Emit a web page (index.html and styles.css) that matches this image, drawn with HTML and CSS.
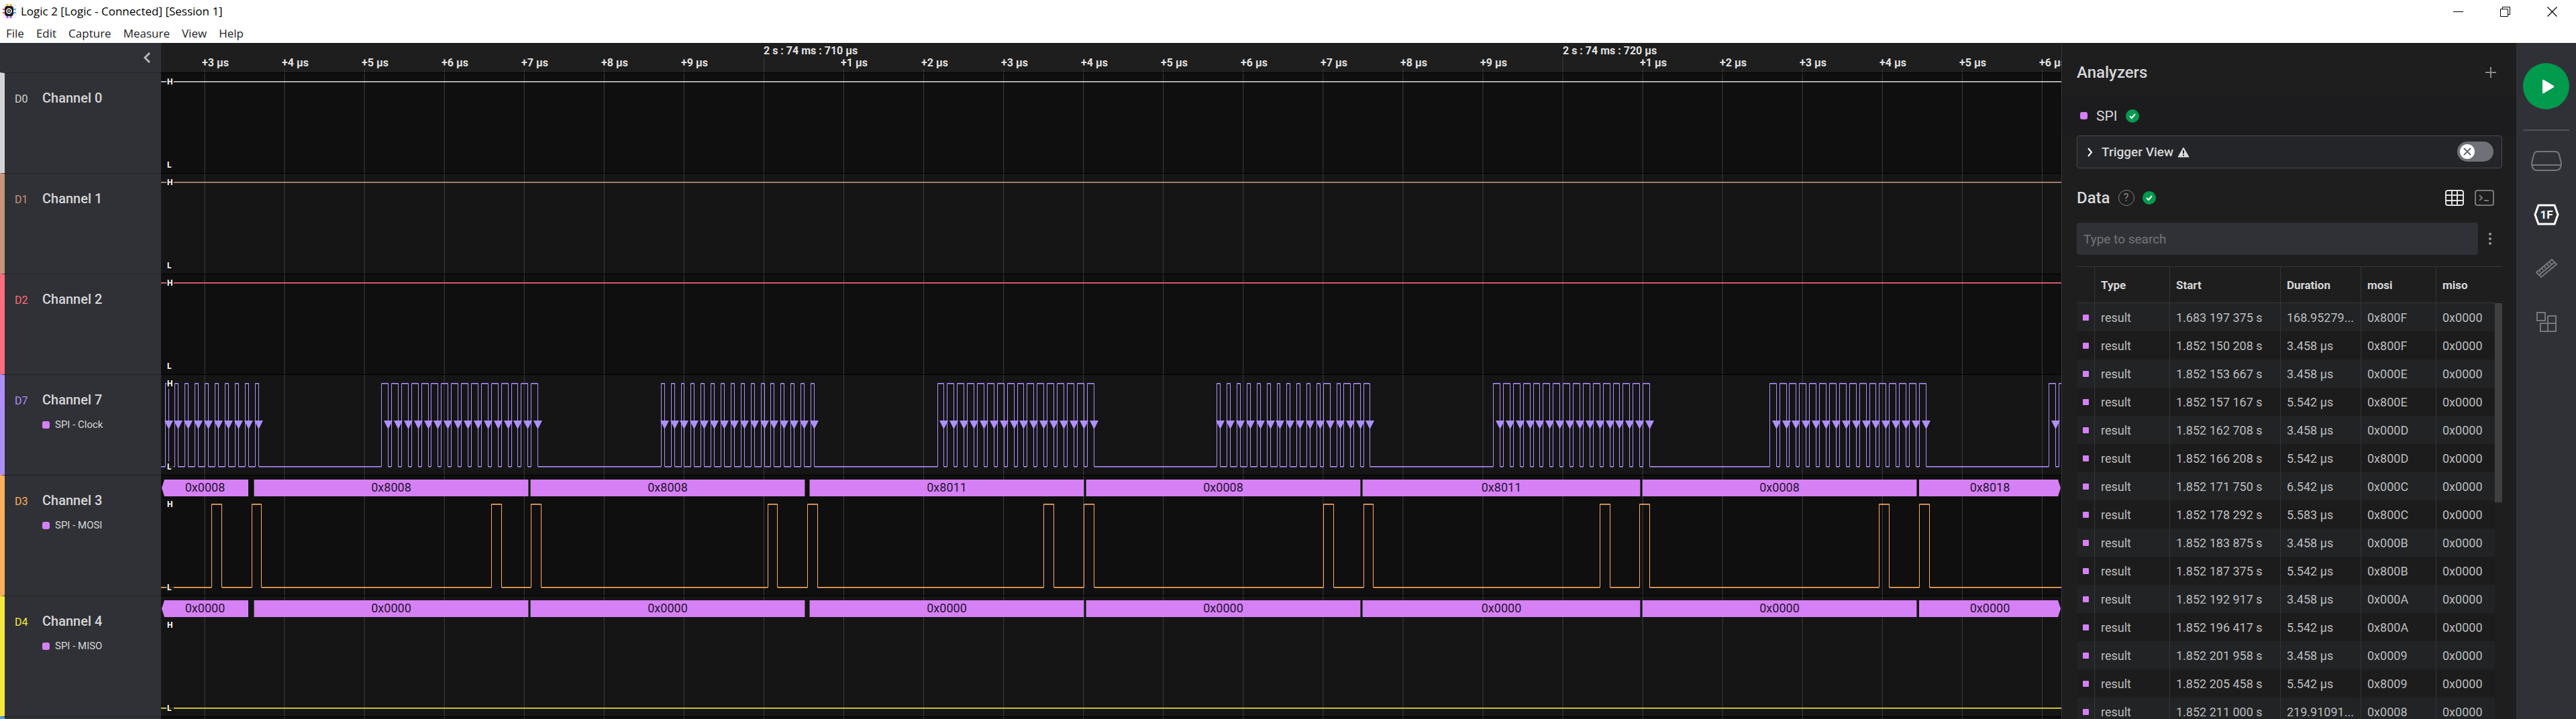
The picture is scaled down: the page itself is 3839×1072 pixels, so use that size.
FILE: index.html
```html
<!DOCTYPE html>
<html lang="en">
<head>
<meta charset="utf-8">
<title>Logic 2 [Logic - Connected] [Session 1]</title>
<link rel="stylesheet" href="styles.css">
</head>
<body>
<header class="titlebar">
  <svg class="app-icon" width="24" height="24" viewBox="0 0 24 24" aria-hidden="true">
    <rect x="1" y="1" width="22" height="22" rx="5" fill="#f6f4fb"/>
    <path d="M9 1v5M14 1v5" stroke="#f5b82e" stroke-width="3"/>
    <path d="M9 18v4M14 18v4" stroke="#a45ce0" stroke-width="3"/>
    <path d="M2 9h4M2 14h4" stroke="#ea4b4b" stroke-width="2"/>
    <path d="M18 9h4M18 14h4" stroke="#3fb2ea" stroke-width="2"/>
    <rect x="5" y="4" width="13" height="15" rx="4" fill="#1b1c20"/>
    <circle cx="11.500" cy="11.500" r="3.500" fill="none" stroke="#fff" stroke-width="1.600"/>
    <circle cx="11.500" cy="11.500" r="1.200" fill="#fff"/>
  </svg>
  <h1 class="window-title">Logic 2 [Logic - Connected] [Session 1]</h1>
  <div class="window-controls">
    <button class="icon-button" aria-label="Minimize"><svg width="15" height="15"><path d="M0 7.500h15" stroke="#000"/></svg></button>
    <button class="icon-button" aria-label="Restore"><svg width="15" height="15" fill="none" stroke="#000"><path d="M.5 3.500h11v11H.5zM3.500 3.500v-3h11v11h-3"/></svg></button>
    <button class="icon-button" aria-label="Close"><svg width="15" height="15"><path d="M.5.5l14 14M14.500.5l-14 14" stroke="#000" stroke-width="1.200"/></svg></button>
  </div>
</header>
<nav class="menubar">
  <button>File</button><button>Edit</button><button>Capture</button><button>Measure</button><button>View</button><button>Help</button>
</nav>
<main class="app">
  <section class="workspace">
    <div class="ruler-row">
      <div class="ruler-side"><button class="icon-button" aria-label="Collapse sidebar"><svg width="12" height="16" fill="none" stroke="#b4b5b8" stroke-width="3"><path d="M10 1L3 8l7 7"/></svg></button></div>
      <div class="ruler" id="ruler"></div>
    </div>
    <div class="channel white" data-signal="high">
      <div class="channel-info"><span class="pin">D0</span><span class="name">Channel 0</span></div>
      <div class="trace"></div>
    </div>
    <div class="channel tan" data-signal="high">
      <div class="channel-info"><span class="pin">D1</span><span class="name">Channel 1</span></div>
      <div class="trace"></div>
    </div>
    <div class="channel red" data-signal="high">
      <div class="channel-info"><span class="pin">D2</span><span class="name">Channel 2</span></div>
      <div class="trace"></div>
    </div>
    <div class="channel violet" data-signal="clock">
      <div class="channel-info"><span class="pin">D7</span><span class="name">Channel 7</span><span class="role"><i class="swatch"></i>SPI - Clock</span></div>
      <div class="trace"></div>
    </div>
    <div class="channel orange decoded" data-signal="mosi">
      <div class="channel-info"><span class="pin">D3</span><span class="name">Channel 3</span><span class="role"><i class="swatch"></i>SPI - MOSI</span></div>
      <div class="trace"></div>
    </div>
    <div class="channel yellow decoded" data-signal="miso">
      <div class="channel-info"><span class="pin">D4</span><span class="name">Channel 4</span><span class="role"><i class="swatch"></i>SPI - MISO</span></div>
      <div class="trace"></div>
    </div>
    <div class="channel blue">
      <div class="channel-info"></div>
      <div class="trace"></div>
    </div>
  </section>

  <aside class="panel">
    <div class="panel-head">
      <h2>Analyzers</h2>
      <button class="icon-button" aria-label="Add analyzer"><svg width="16" height="16"><path d="M8 0v16M0 8h16" stroke="#8a8b90" stroke-width="2"/></svg></button>
    </div>
    <div class="analyzer">
      <i class="swatch"></i><span>SPI</span>
      <svg width="20" height="20" viewBox="0 0 20 20"><circle cx="10" cy="10" r="10" fill="#029a4d"/><path d="M6 10l3 3 5-6" fill="none" stroke="#fff" stroke-width="2"/></svg>
    </div>
    <div class="trigger">
      <svg width="8" height="14" fill="none" stroke="#fff" stroke-width="2"><path d="M1 1l5 6-5 6"/></svg>
      <label for="trigger-toggle">Trigger View</label>
      <svg width="18" height="16" viewBox="0 0 18 16"><path d="M9 1l8 14H1z" fill="#dcdcdc" stroke="#dcdcdc" stroke-linejoin="round"/><path d="M9 5v5M9 11.500v2" stroke="#232427" stroke-width="2"/></svg>
      <span class="toggle">
        <input type="checkbox" id="trigger-toggle">
        <svg width="22" height="22" viewBox="0 0 22 22" aria-hidden="true"><circle cx="11" cy="11" r="11" fill="#fff"/><path d="M6 6l10 10M16 6L6 16" stroke="#66676d" stroke-width="2"/></svg>
      </span>
    </div>
    <div class="data-head">
      <h2>Data</h2>
      <button class="help" aria-label="Help">?</button>
      <svg width="20" height="20" viewBox="0 0 20 20"><circle cx="10" cy="10" r="10" fill="#029a4d"/><path d="M6 10l3 3 5-6" fill="none" stroke="#fff" stroke-width="2"/></svg>
      <span class="view-buttons">
        <button class="icon-button" aria-label="Table view"><svg width="28" height="24" fill="none" stroke="#e2e2e2" stroke-width="2"><rect x="1" y="1" width="26" height="22" rx="3"/><path d="M10 1v22M18 1v22M1 8h26M1 16h26"/></svg></button>
        <button class="icon-button" aria-label="Terminal view"><svg width="29" height="24" fill="none" stroke="#77787c" stroke-width="2"><rect x="1" y="1" width="27" height="22" rx="3"/><path d="M7 8l4 4-4 4M14 16h7"/></svg></button>
      </span>
    </div>
    <div class="search">
      <input type="text" placeholder="Type to search" aria-label="Search data">
      <button class="icon-button" aria-label="More options"><svg width="4" height="20" fill="#9a9a9e"><circle cx="2" cy="3" r="2"/><circle cx="2" cy="10" r="2"/><circle cx="2" cy="17" r="2"/></svg></button>
    </div>
    <div class="data-table">
      <table>
        <colgroup><col class="c-mark"><col class="c-type"><col class="c-start"><col class="c-duration"><col class="c-mosi"><col></colgroup>
        <thead><tr><th></th><th>Type</th><th>Start</th><th>Duration</th><th>mosi</th><th>miso</th></tr></thead>
        <tbody>
          <tr><td><i class="mark"></i></td><td>result</td><td>1.683 197 375 s</td><td>168.95279...</td><td>0x800F</td><td>0x0000</td></tr>
          <tr><td><i class="mark"></i></td><td>result</td><td>1.852 150 208 s</td><td>3.458 µs</td><td>0x800F</td><td>0x0000</td></tr>
          <tr><td><i class="mark"></i></td><td>result</td><td>1.852 153 667 s</td><td>3.458 µs</td><td>0x000E</td><td>0x0000</td></tr>
          <tr><td><i class="mark"></i></td><td>result</td><td>1.852 157 167 s</td><td>5.542 µs</td><td>0x800E</td><td>0x0000</td></tr>
          <tr><td><i class="mark"></i></td><td>result</td><td>1.852 162 708 s</td><td>3.458 µs</td><td>0x000D</td><td>0x0000</td></tr>
          <tr><td><i class="mark"></i></td><td>result</td><td>1.852 166 208 s</td><td>5.542 µs</td><td>0x800D</td><td>0x0000</td></tr>
          <tr><td><i class="mark"></i></td><td>result</td><td>1.852 171 750 s</td><td>6.542 µs</td><td>0x000C</td><td>0x0000</td></tr>
          <tr><td><i class="mark"></i></td><td>result</td><td>1.852 178 292 s</td><td>5.583 µs</td><td>0x800C</td><td>0x0000</td></tr>
          <tr><td><i class="mark"></i></td><td>result</td><td>1.852 183 875 s</td><td>3.458 µs</td><td>0x000B</td><td>0x0000</td></tr>
          <tr><td><i class="mark"></i></td><td>result</td><td>1.852 187 375 s</td><td>5.542 µs</td><td>0x800B</td><td>0x0000</td></tr>
          <tr><td><i class="mark"></i></td><td>result</td><td>1.852 192 917 s</td><td>3.458 µs</td><td>0x000A</td><td>0x0000</td></tr>
          <tr><td><i class="mark"></i></td><td>result</td><td>1.852 196 417 s</td><td>5.542 µs</td><td>0x800A</td><td>0x0000</td></tr>
          <tr><td><i class="mark"></i></td><td>result</td><td>1.852 201 958 s</td><td>3.458 µs</td><td>0x0009</td><td>0x0000</td></tr>
          <tr><td><i class="mark"></i></td><td>result</td><td>1.852 205 458 s</td><td>5.542 µs</td><td>0x8009</td><td>0x0000</td></tr>
          <tr><td><i class="mark"></i></td><td>result</td><td>1.852 211 000 s</td><td>219.91091...</td><td>0x0008</td><td>0x0000</td></tr>
        </tbody>
      </table>
      <div class="scroll-thumb"></div>
    </div>
  </aside>

  <nav class="toolrail">
    <button class="play" aria-label="Start capture"><svg width="20" height="22"><path d="M1 2v18q0 2 2 1l15-9q1-1 0-2L3 1Q1 0 1 2z" fill="#fff"/></svg></button>
    <hr>
    <button class="icon-button" aria-label="Device"><svg width="46" height="30" fill="none" stroke="#77787d" stroke-width="2"><path d="M10 1h26q5 0 6 5l3 12q0 11-8 11H9q-8 0-8-11L4 6q1-5 6-5zM2 21h42"/></svg></button>
    <button class="icon-button" aria-label="Analyzers"><svg width="38" height="32" viewBox="0 0 38 32"><path d="M7 2h24l5 14-5 14H7L2 16z" fill="none" stroke="#fff" stroke-width="3"/><text x="19" y="22" text-anchor="middle" class="hex-label">1F</text></svg></button>
    <button class="icon-button" aria-label="Measurements"><svg width="32" height="28" fill="none" stroke="#77787d" stroke-width="2"><path d="M1 20L24 1l7 7L8 27zM5 24L28 5M5 17l2 3M9 14l2 3M13 11l2 3M17 8l2 3M21 5l2 3"/></svg></button>
    <button class="icon-button" aria-label="Extensions"><svg width="30" height="30" fill="none" stroke="#77787d" stroke-width="2"><path d="M1 1h12v12H1zM17 6h12v23H6V17h23M17 6v23"/></svg></button>
  </nav>
</main>
<script src="traces.js"></script>
</body>
</html>
```
FILE: styles.css
```css
* { box-sizing: border-box; }
body {
  margin: 0;
  height: 100vh;
  display: flex;
  flex-direction: column;
  overflow: hidden;
  background: #fff;
  color: #d6d7d9;
  font-family: Roboto, "Liberation Sans", sans-serif;
  font-size: 18px;
}
button { border: 0; padding: 0; background: none; color: inherit; font: inherit; }
svg { display: block; flex: none; }
h1, h2 { margin: 0; font-weight: 500; }
.icon-button { display: grid; place-items: center; }

/* window frame */
.titlebar {
  display: flex;
  align-items: center;
  height: 34px;
  padding-left: 2px;
  color: #000;
  font-family: "Open Sans", "Noto Sans", sans-serif;
}
.window-title { margin-left: 5px; font-size: 17px; line-height: 24px; font-weight: 400; }
.window-controls { display: flex; gap: 55px; margin-left: auto; padding-right: 28px; }
.menubar {
  display: flex;
  gap: 18px;
  height: 30px;
  padding: 0 9px;
  color: #222;
  font-family: "Open Sans", "Noto Sans", sans-serif;
  font-size: 17px;
}

/* workspace */
.app { flex: 1; min-height: 0; display: grid; grid-template-columns: minmax(0, 1fr) 678px 89px; }
.workspace { overflow: hidden; background: #0f0f0f; }
.ruler-row { display: grid; grid-template-columns: 240px minmax(0, 1fr); height: 44px; }
.ruler-side { display: flex; justify-content: flex-end; padding: 0 15px 0; background: #303136; }
.ruler { position: relative; overflow: hidden; background: #1e1e1e; color: #e2e2e2; font-size: 16px; font-weight: 700; line-height: 20px; }
.ruler svg, .trace svg { position: absolute; left: 0; top: 0; width: 100%; height: 100%; }
.tick { position: absolute; top: 20px; white-space: nowrap; }
.tick.major { top: 2px; }
.grid-line { stroke: #3e3e42; stroke-width: 1; }

.channel { display: grid; grid-template-columns: 240px minmax(0, 1fr); height: 150px; }
.channel.decoded { height: 180px; }
.channel-info {
  display: grid;
  grid-template-columns: 41px 1fr;
  align-content: start;
  align-items: baseline;
  row-gap: 16px;
  padding: 25px 0 0 15px;
  border-top: 1px solid #222327;
  border-left: 7px solid var(--tone);
  background: #303136;
}
.pin { color: var(--tone); font-size: 16px; }
.name { font-size: 20px; font-weight: 500; line-height: 24px; }
.role { grid-column: 2; display: flex; align-items: center; gap: 8px; font-size: 15px; line-height: 18px; }
.swatch { width: 11px; height: 11px; border-radius: 3px; background: #d680f5; }
.trace { position: relative; overflow: hidden; border-top: 1px solid #000; background: #0f0f0f; }
.channel:nth-child(odd) .trace { background: #151515; }
.white { --tone: #d4d4d4; }
.tan { --tone: #c8967a; }
.red { --tone: #ff6e7f; }
.violet { --tone: #ae90fb; }
.orange { --tone: #ffb05c; }
.yellow { --tone: #f7e83e; }
.blue { --tone: #4f9fe8; }
.signal { fill: none; stroke: var(--tone); stroke-width: 1; }
.signal.soft { opacity: .6; }
.edge { fill: var(--tone); }
.level {
  position: absolute;
  left: 8px;
  width: 11px;
  padding-left: 1px;
  border-radius: 3px;
  background: rgba(18, 18, 18, .8);
  color: #fff;
  font-size: 12px;
  font-weight: 700;
  line-height: 16px;
}
.level.high { top: 5px; }
.level.low { top: 129px; }
.decoded .level.high { top: 35px; }
.decoded .level.low { top: 159px; }
.bubble {
  position: absolute;
  top: 6px;
  height: 25px;
  background: #d680f5;
  box-shadow: 1px 0 #505055, -1px 0 #505055;
  color: #251430;
  font-size: 18px;
  line-height: 24px;
  text-align: center;
}
.bubble.from-left { clip-path: polygon(4px 0, 100% 0, 100% 100%, 4px 100%, 0 50%); }
.bubble.to-right { clip-path: polygon(0 0, calc(100% - 4px) 0, 100% 50%, calc(100% - 4px) 100%, 0 100%); }

/* analyzer panel */
.panel { overflow: hidden; border-left: 1px solid #35363a; background: #1e1e1e; }
.panel-head, .data-head { display: flex; align-items: center; padding: 0 22px; }
.panel-head { justify-content: space-between; height: 79px; padding-top: 8px; padding-right: 30px; }
h2 { font-size: 24px; line-height: 28px; }
.analyzer { display: flex; align-items: center; gap: 13px; height: 59px; padding-left: 27px; background: #1c1c1f; font-size: 21px; }
.trigger {
  display: flex;
  align-items: center;
  height: 49px;
  margin: 0 21px 0 22px;
  padding: 0 12px 0 15px;
  border: 1px solid #4a4b4f;
  border-radius: 4px;
  background: #242528;
  font-size: 19px;
  font-weight: 500;
}
.trigger label { margin: 0 6px 0 13px; }
.toggle { display: grid; align-items: center; height: 30px; margin: 0 0 2px auto; }
.toggle > * { grid-area: 1 / 1; }
.toggle input { appearance: none; width: 54px; height: 30px; margin: 0; border-radius: 15px; background: #707178; }
.toggle svg { margin-left: 4px; pointer-events: none; }
.data-head { height: 81px; padding-top: 6px; gap: 12px; }
.help { width: 24px; height: 24px; border: 1px solid #808186; border-radius: 50%; color: #8a8b90; font-size: 16px; line-height: 20px; }
.view-buttons { display: flex; gap: 16px; margin-left: auto; padding-right: 11px; }
.search { display: flex; align-items: center; gap: 16px; height: 48px; padding: 0 37px 0 22px; }
.search input { flex: 1; height: 48px; padding: 0 10px; border: 0; border-radius: 4px; background: #303136; color: #d6d7d9; font: inherit; font-size: 19px; }
.search input::placeholder { color: #74757a; }

.data-table { position: relative; margin: 17px 21px 0 22px; border-top: 1px solid #35363a; }
table { width: calc(100% - 11px); table-layout: fixed; border-collapse: separate; border-spacing: 0; }
.c-mark { width: 26px; }
.c-type { width: 112px; }
.c-start { width: 165px; }
.c-duration { width: 120px; }
.c-mosi { width: 112px; }
th, td { padding: 0 0 0 9px; border-left: 1px solid #35363a; text-align: left; white-space: nowrap; }
th:first-child, td:first-child { border-left: 0; }
th { height: 54px; border-bottom: 1px solid #35363a; font-size: 17px; font-weight: 700; }
td { height: 42px; color: #bcbdbf; }
tbody tr:nth-child(odd) { background: #212325; }
tbody tr:nth-child(even) { background: #1c1c1c; }
.mark { display: block; width: 9px; height: 9px; border-radius: 1px; background: #d680f5; }
.scroll-thumb { position: absolute; top: 54px; right: 0; width: 11px; height: 297px; background: #404040; }

/* tool rail */
.toolrail { display: flex; flex-direction: column; align-items: center; padding-top: 30px; background: #303136; }
.play { display: grid; place-items: center; width: 69px; height: 69px; padding-left: 6px; border-radius: 50%; background: #029a4d; }
.toolrail hr { width: 69px; height: 2px; margin: 30px 0 0; border: 0; background: #515257; }
.toolrail .icon-button { height: 32px; margin-top: 48px; }
.toolrail hr + .icon-button { margin-top: 29px; }
.hex-label { fill: #fff; font-size: 17px; font-weight: 700; }
```
FILE: traces.js
```js
const SVG = 'http://www.w3.org/2000/svg';
const GRID_START = 65, GRID_STEP = 119.06, GRID_COUNT = 24;
const SAMPLE = GRID_STEP / 24, ORIGIN = 6.1, END = 4000;

// Sample index to crisp pixel column.
const column = n => Math.floor(ORIGIN + n * SAMPLE) + 0.5;

// Clock bursts: first rise, pulse count, samples held high. Every pulse is three samples apart.
const bursts = [[0, 10, 1], [65, 16, 2], [149, 16, 1], [232, 16, 2], [316, 11, 1],
  [348, 1, 2], [352, 1, 1], [354, 3, 2], [399, 16, 2], [482, 16, 2], [566, 3, 2]];
const clock = bursts.flatMap(([start, count, held]) =>
  Array.from({ length: count }, (_, i) => [start + 3 * i, start + 3 * i + held]));
const mosi = [[14, 17], [26, 29], [98, 101], [110, 113], [181, 184], [193, 196], [264, 267],
  [276, 279], [348, 351], [360, 363], [431, 434], [443, 446], [515, 518], [527, 530]];

// Decoded frames: left, right, MOSI value.
const frames = [[1, 130, '0x0008'], [139, 547, '0x8008'], [551, 959, '0x8008'], [967, 1375, '0x8011'],
  [1379, 1787, '0x0008'], [1791, 2204, '0x8011'], [2208, 2616, '0x0008'], [2620, 2831, '0x8018']];

function shape(parent, tag, attributes) {
  const node = document.createElementNS(SVG, tag);
  for (const key in attributes) node.setAttribute(key, attributes[key]);
  parent.appendChild(node);
  return node;
}

function label(parent, className, text) {
  const node = document.createElement('span');
  node.className = className;
  node.textContent = text;
  parent.appendChild(node);
  return node;
}

const ruler = document.getElementById('ruler');
const rulerSvg = shape(ruler, 'svg', {});
for (let k = 0; k < GRID_COUNT; k++) {
  const x = GRID_START + k * GRID_STEP;
  const major = k % 10 === 7;
  shape(rulerSvg, 'line', { class: 'grid-line', x1: x, x2: x, y1: major ? 21 : 39, y2: 44 });
  const text = major ? `2 s : 74 ms : ${k === 7 ? 710 : 720} µs` : `+${(k + 3) % 10} µs`;
  label(ruler, major ? 'tick major' : 'tick', text).style.left = Math.round(major ? x : x - 4) + 'px';
}

function drawSignal(svg, pulses, high, low, idle) {
  let line = `M0 ${idle + .5}`;
  let soft = `M0 ${idle + 1.5}`;
  for (const [rise, fall] of pulses) {
    const a = column(rise), b = column(fall);
    line += `H${a}V${high + .5}H${b}V${low + .5}`;
    soft += `H${a}M${a} ${high + 1.5}H${b}M${b} ${low + 1.5}`;
  }
  shape(svg, 'path', { class: 'signal soft', d: soft + `H${END}` });
  shape(svg, 'path', { class: 'signal', d: line + `H${END}` });
}

for (const channel of document.querySelectorAll('.channel')) {
  const trace = channel.querySelector('.trace');
  const svg = shape(trace, 'svg', {});
  for (let k = 0; k < GRID_COUNT; k++) {
    const x = GRID_START + k * GRID_STEP;
    shape(svg, 'line', { class: 'grid-line', x1: x, x2: x, y1: 0, y2: 180 });
  }
  const kind = channel.dataset.signal;
  if (!kind) continue;
  const decoded = channel.classList.contains('decoded');
  const high = decoded ? 42 : 12, low = high + 124;
  const pulses = kind === 'clock' ? clock : kind === 'mosi' ? mosi : [];
  drawSignal(svg, pulses, high, low, kind === 'high' ? high : low);
  if (kind === 'clock') {
    for (const [, fall] of clock) {
      const x = column(fall);
      shape(svg, 'path', { class: 'edge', d: `M${x - 6.5} 68h13l-6.5 13z` });
    }
  }
  if (decoded) {
    frames.forEach(([left, right, value], i) => {
      const edge = i === 0 ? ' from-left' : i === frames.length - 1 ? ' to-right' : '';
      const node = label(trace, 'bubble' + edge, kind === 'mosi' ? value : '0x0000');
      node.style.left = left + 'px';
      node.style.width = right - left + 'px';
    });
  }
  label(trace, 'level high', 'H');
  label(trace, 'level low', 'L');
}
```
